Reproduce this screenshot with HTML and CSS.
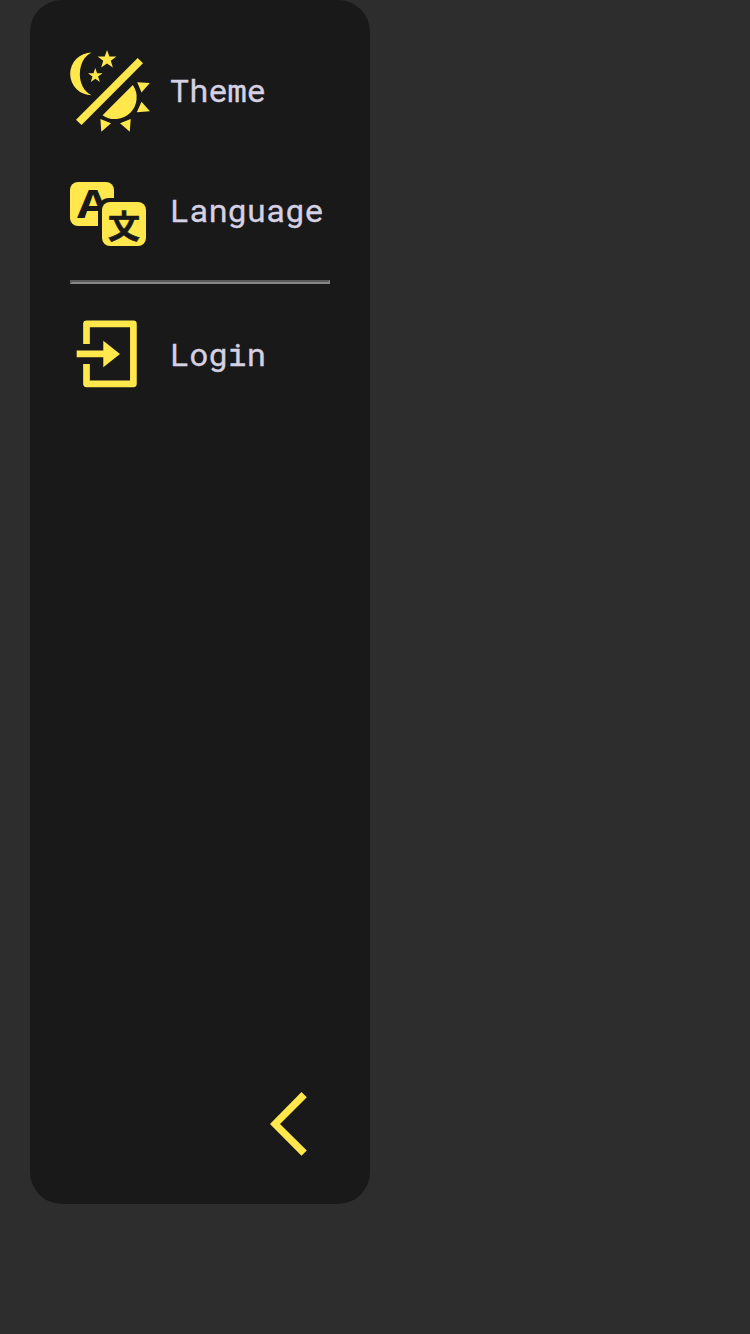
FILE: index.html
```html
<!DOCTYPE html>
<html lang="en">
<head>
<meta charset="utf-8">
<title>Menu</title>
<link rel="stylesheet" href="styles.css">
</head>
<body>
<nav class="sidebar">
  <a class="item item-theme">
    <svg class="icon" viewBox="0 0 80 82">
      <path d="M21.500 2.500A21.350 21.350 0 0 0 21.500 45.200C6 38 6 10 21.500 2.500Z"/>
      <path d="M37 0l2.400 6.600 7-.1-5.600 4.200 2.100 6.700-5.900-4-5.800 4 2-6.700-5.600-4.200 7.100.1Z"/>
      <path d="M25.300 18l1.800 5.300 5.500 0-4.500 3.300 1.800 5.300-4.600-3.200-4.500 3.200 1.700-5.300-4.500-3.300 5.500 0Z"/>
      <path d="M67.700 8L73 13.300 11.500 75 6 69.700Z"/>
      <path d="M62.800 35A21.700 21.700 0 0 1 32.600 65.200Z"/>
      <path d="M67.200 32.200l12.600.9-8.300 9.500ZM71.500 51.700l8.400 9.500-13.100 1ZM30.400 69l10.600 4.300-9.700 8.500ZM50 73.300l10.700-4.400-.9 12.900Z"/>
    </svg>
    <span class="label">Theme</span>
  </a>
  <a class="item item-language">
    <svg class="icon" viewBox="0 0 80 64">
      <rect width="44" height="44" rx="8"/>
      <text class="glyph latin" x="7" y="36" textLength="32" lengthAdjust="spacingAndGlyphs">A</text>
      <rect class="halo" x="28" y="16" width="52" height="52" rx="11"/>
      <rect x="32" y="20" width="44" height="44" rx="8"/>
      <text class="glyph han" x="38" y="55.500">文</text>
    </svg>
    <span class="label">Language</span>
  </a>
  <hr class="divider">
  <a class="item item-login">
    <svg class="icon" viewBox="0 0 80 80">
      <path class="frame" d="M16.500 30V9.900H63.400V69.800H16.500V50"/>
      <path d="M6.700 36.500h26.600V26.700L50 40 33.300 53.300V43.300H6.700Z"/>
    </svg>
    <span class="label">Login</span>
  </a>
  <a class="collapse">
    <svg class="chevron" viewBox="0 0 37 64">
      <path d="M31.500 0L36.800 5.300 10 31.900 36.800 58.600 31.500 63.700 0 31.900Z"/>
    </svg>
  </a>
</nav>
</body>
</html>
```
FILE: styles.css
```css
body {
  margin: 0;
  background: #2d2d2d;
}

.sidebar {
  box-sizing: border-box;
  display: flex;
  flex-direction: column;
  width: 340px;
  height: 1204px;
  margin-left: 30px;
  padding: 50px 40px 48px;
  border-radius: 32px;
  background: #191919;
}

.item {
  display: flex;
  align-items: center;
  gap: 20px;
  height: 82px;
}

.item-language {
  margin-top: 41px;
}

.item-login {
  height: 80px;
  margin-top: 30px;
}

.icon {
  flex: none;
  width: 80px;
  fill: #ffe74c;
}

.label {
  color: #d5d1e2;
  font: 32px/40px "Roboto Mono", "DejaVu Sans Mono", monospace;
  -webkit-text-stroke: 0.4px #d5d1e2;
}

.item-theme .label {
  margin-bottom: 2px;
}

.item-language .label {
  margin-bottom: 8px;
}

.divider {
  box-sizing: border-box;
  width: 260px;
  height: 4px;
  margin: 25px 0 0;
  border: 2px solid;
  border-color: #5b5b5b #858585 #858585 #5b5b5b;
}

.glyph {
  fill: #191919;
  font-weight: 700;
}

.latin {
  font-family: "Open Sans", sans-serif;
  font-size: 39px;
}

.han {
  font-family: "Noto Sans CJK JP", sans-serif;
  font-size: 32px;
  stroke: #191919;
  stroke-width: 0.6px;
}

.halo {
  fill: #191919;
}

.frame {
  fill: none;
  stroke: #ffe74c;
  stroke-width: 6.700px;
  stroke-linejoin: round;
}

.collapse {
  display: flex;
  align-self: flex-end;
  margin: auto 23px 0 0;
}

.chevron {
  width: 37px;
  height: 64px;
  fill: #ffe74c;
}
```
